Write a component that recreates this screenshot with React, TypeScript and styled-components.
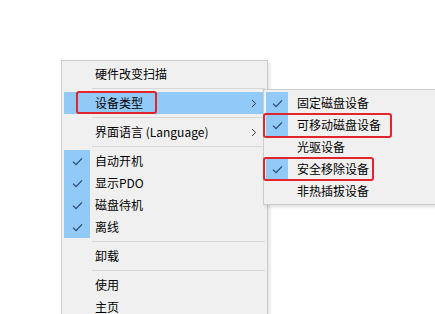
import React from 'react'
import styled, { createGlobalStyle } from 'styled-components';

const GlobalStyle = createGlobalStyle`
    html, body {
        margin: 0;
        padding: 0;
        background: #ffffff;
        overflow: hidden;
    }
    body {
        font-family: "Noto Sans CJK SC", "Microsoft YaHei", sans-serif;
        font-size: 12px;
        color: #000;
    }
`;

const Desktop = styled.div`
    width: 435px;
    height: 314px;
    padding: 60px 0 0 61px;
    box-sizing: border-box;
    display: flex;
    align-items: flex-start;
    overflow: hidden;
`;

const Menu = styled.div<{ $width: number; $top?: number; $overlap?: number }>`
    position: relative;
    flex-shrink: 0;
    width: ${p => p.$width}px;
    margin-top: ${p => p.$top || 0}px;
    margin-left: ${p => -(p.$overlap || 0)}px;
    padding: 2px 2px;
    box-sizing: border-box;
    background: #f0f0f0;
    border: 1px solid #cccccc;
    box-shadow: 2px 2px 3px rgba(0, 0, 0, 0.12);
    display: flex;
    flex-direction: column;
`;

const Item = styled.div<{ $active?: boolean }>`
    display: flex;
    align-items: center;
    height: 22px;
    background: ${p => (p.$active ? '#91c9f7' : 'transparent')};
`;

const CheckCell = styled.div<{ $on?: boolean; $size: number }>`
    width: ${p => p.$size}px;
    height: 100%;
    flex-shrink: 0;
    display: flex;
    align-items: center;
    justify-content: center;
    background: ${p => (p.$on ? '#91c9f7' : 'transparent')};
`;

const Label = styled.div<{ $gap: number }>`
    flex: 1;
    padding-left: ${p => p.$gap}px;
    white-space: nowrap;
    line-height: 22px;
`;

const Arrow = styled.div`
    width: 14px;
    display: flex;
    align-items: center;
    justify-content: flex-start;
`;

const Separator = styled.div`
    height: 7px;
    display: flex;
    align-items: center;
    padding-left: 28px;
    &::after {
        content: '';
        flex: 1;
        height: 1px;
        background: #d7d7d7;
    }
`;

const Marker = styled.div<{ $x: number; $y: number; $w: number; $h: number }>`
    position: absolute;
    left: ${p => p.$x}px;
    top: ${p => p.$y}px;
    width: ${p => p.$w}px;
    height: ${p => p.$h}px;
    border: 2.5px solid #e2242b;
    border-radius: 3px;
    box-sizing: border-box;
    pointer-events: none;
`;

const Check = () => (
    <svg width="11" height="9" viewBox="0 0 11 9">
        <path d="M1 4.6 L4 7.6 L10 1.4" fill="none" stroke="#2b4a6e" strokeWidth="1.3" />
    </svg>
);

const Chevron = () => (
    <svg width="6" height="9" viewBox="0 0 6 9">
        <path d="M1 1 L4.6 4.5 L1 8" fill="none" stroke="#333" strokeWidth="1" />
    </svg>
);

type Entry = { name?: string; checked?: boolean; sub?: boolean; active?: boolean; sep?: boolean };

const mainItems: Entry[] = [
    { name: '硬件改变扫描' },
    { sep: true },
    { name: '设备类型', sub: true, active: true },
    { sep: true },
    { name: '界面语言 (Language)', sub: true },
    { sep: true },
    { name: '自动开机', checked: true },
    { name: '显示PDO', checked: true },
    { name: '磁盘待机', checked: true },
    { name: '离线', checked: true },
    { sep: true },
    { name: '卸载' },
    { sep: true },
    { name: '使用' },
    { name: '主页' },
];

const deviceItems: Entry[] = [
    { name: '固定磁盘设备', checked: true },
    { name: '可移动磁盘设备', checked: true },
    { name: '光驱设备' },
    { name: '安全移除设备', checked: true },
    { name: '非热插拔设备' },
];

const App = () => {
    return (
        <>
            <GlobalStyle />
            <Desktop>
                <Menu $width={207}>
                    {mainItems.map((item, idx) =>
                        item.sep ? (
                            <Separator key={`main-sep-` + idx} />
                        ) : (
                            <Item key={`main-item-` + idx} $active={item.active}>
                                <CheckCell $size={26} $on={item.checked}>
                                    {item.checked && <Check />}
                                </CheckCell>
                                <Label $gap={5}>{item.name}</Label>
                                <Arrow>{item.sub && <Chevron />}</Arrow>
                            </Item>
                        )
                    )}
                    <Marker $x={14} $y={30} $w={81} $h={23} />
                </Menu>
                <Menu $width={176} $top={29} $overlap={5}>
                    {deviceItems.map((item, idx) => (
                        <Item key={`device-item-` + idx}>
                            <CheckCell $size={22} $on={item.checked}>
                                {item.checked && <Check />}
                            </CheckCell>
                            <Label $gap={9}>{item.name}</Label>
                        </Item>
                    ))}
                    <Marker $x={-1} $y={23} $w={129} $h={25} />
                    <Marker $x={-1} $y={67} $w={111} $h={24} />
                </Menu>
            </Desktop>
        </>
    );
}

export default App;
